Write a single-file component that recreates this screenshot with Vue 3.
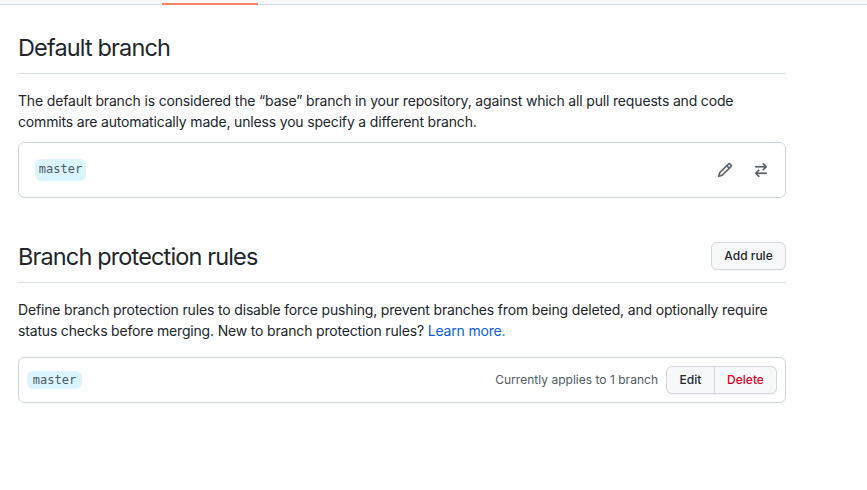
<script setup>
const rules = [{ name: 'master', count: 1 }]
</script>

<template>
  <div class="page">
    <nav class="tabs"><span class="tab-active"></span></nav>
    <main class="content">
      <section>
        <header class="subhead"><h2>Default branch</h2></header>
        <p class="text">
          <span class="l1">The default branch is considered the “base” branch in your repository, against which all pull requests and code</span><br />
          <span class="l2">commits are automatically made, unless you specify a different branch.</span>
        </p>
        <div class="box default-box">
          <span class="branch large">master</span>
          <div class="icons">
            <svg width="16" height="16" viewBox="0 0 16 16"><path fill-rule="evenodd" d="M11.013 1.427a1.75 1.75 0 012.474 0l1.086 1.086a1.75 1.75 0 010 2.474l-8.61 8.61c-.21.21-.47.364-.756.445l-3.251.93a.75.75 0 01-.927-.928l.929-3.25a1.75 1.75 0 01.445-.758l8.61-8.61zm1.414 1.06a.25.25 0 00-.354 0L10.811 3.75l1.439 1.44 1.263-1.263a.25.25 0 000-.354l-1.086-1.086zM11.189 6.25L9.75 4.81l-6.286 6.287a.25.25 0 00-.064.108l-.558 1.953 1.953-.558a.249.249 0 00.108-.064l6.286-6.286z" /></svg>
            <svg width="16" height="16" viewBox="0 0 16 16"><path fill-rule="evenodd" d="M5.22 14.78a.75.75 0 001.06-1.06L4.56 12h8.69a.75.75 0 000-1.5H4.56l1.72-1.72a.75.75 0 00-1.06-1.06l-3 3a.75.75 0 000 1.06l3 3zm5.56-6.5a.75.75 0 11-1.06-1.06l1.72-1.72H2.75a.75.75 0 010-1.5h8.69L9.72 2.28a.75.75 0 011.06-1.06l3 3a.75.75 0 010 1.06l-3 3z" /></svg>
          </div>
        </div>
      </section>

      <section class="protection">
        <header class="subhead">
          <h2>Branch protection rules</h2>
          <button class="btn add">Add rule</button>
        </header>
        <p class="text">
          <span class="l3">Define branch protection rules to disable force pushing, prevent branches from being deleted, and optionally require</span><br />
          <span class="l4">status checks before merging. New to branch protection rules? <a>Learn more.</a></span>
        </p>
        <div v-for="rule in rules" :key="rule.name" class="box rule-box">
          <span class="branch small">{{ rule.name }}</span>
          <span class="applies">Currently applies to {{ rule.count }} branch</span>
          <div class="group">
            <button class="btn edit">Edit</button>
            <button class="btn delete">Delete</button>
          </div>
        </div>
      </section>
    </main>
  </div>
</template>

<style>
body { background: #fff; overflow: hidden; }
</style>

<style scoped>
.page {
  height: 490px;
  font-family: Inter, "Liberation Sans", sans-serif;
  font-size: 14px;
  line-height: 21px;
  color: #20262b;
}
.tabs {
  box-sizing: border-box;
  height: 5px;
  padding-left: 162px;
  background: #f6f8fa;
  border-bottom: 1px solid #d1dae1;
}
.tab-active {
  display: block;
  width: 96px;
  height: 2px;
  background: #f9826c;
  transform: translateY(3px);
}
.content { width: 768px; padding: 24px 0 0 18px; }
.subhead {
  display: flex;
  align-items: flex-start;
  justify-content: space-between;
  height: 44px;
  margin-bottom: 16px;
  border-bottom: 1px solid #d5dde3;
}
h2 {
  margin: 0;
  font-size: 23.5px;
  font-weight: 400;
  line-height: 38px;
  letter-spacing: -0.86px;
  white-space: nowrap;
}
.text { margin: 0; white-space: nowrap; }
.l1, .l3 { letter-spacing: -0.163px; }
.l2, .l4 { letter-spacing: -0.173px; }
a { color: #0560dc; }
.box {
  display: flex;
  align-items: center;
  box-sizing: border-box;
  border: 1px solid #cdd6dd;
  border-radius: 6px;
}
.default-box { height: 56px; margin-top: 10px; padding: 0 16px; justify-content: space-between; }
.branch {
  box-sizing: border-box;
  border-radius: 6px;
  background: #dbf5ff;
  color: #4c5965;
  font-family: "DejaVu Sans Mono", monospace;
  font-size: 12px;
  text-align: center;
}
.large { width: 51px; height: 22px; line-height: 20px; }
.small { width: 55px; height: 18px; line-height: 18px; }
.icons { display: flex; gap: 20px; }
.icons svg { display: block; fill: #586069; stroke: #586069; stroke-width: 0.2; }
.protection { margin-top: 40px; }
.rule-box { height: 46px; margin-top: 16px; padding: 0 8px; }
.applies {
  margin-left: auto;
  margin-right: 8px;
  padding-bottom: 2px;
  font-size: 12px;
  letter-spacing: 0.02px;
  color: #525b64;
  white-space: nowrap;
}
.btn {
  box-sizing: border-box;
  height: 28px;
  padding: 0;
  border: 1px solid #d5d8dc;
  border-radius: 6px;
  background: #f6f8fa;
  box-shadow: 0 1px 0 rgba(27, 31, 35, 0.04);
  color: #20262b;
  font: 500 12px/20px Inter, sans-serif;
}
.add { width: 75px; margin-top: 4px; }
.group { display: flex; }
.edit { width: 49px; border-radius: 6px 0 0 6px; }
.delete { width: 63px; margin-left: -1px; border-radius: 0 6px 6px 0; color: #dc0028; }
</style>
